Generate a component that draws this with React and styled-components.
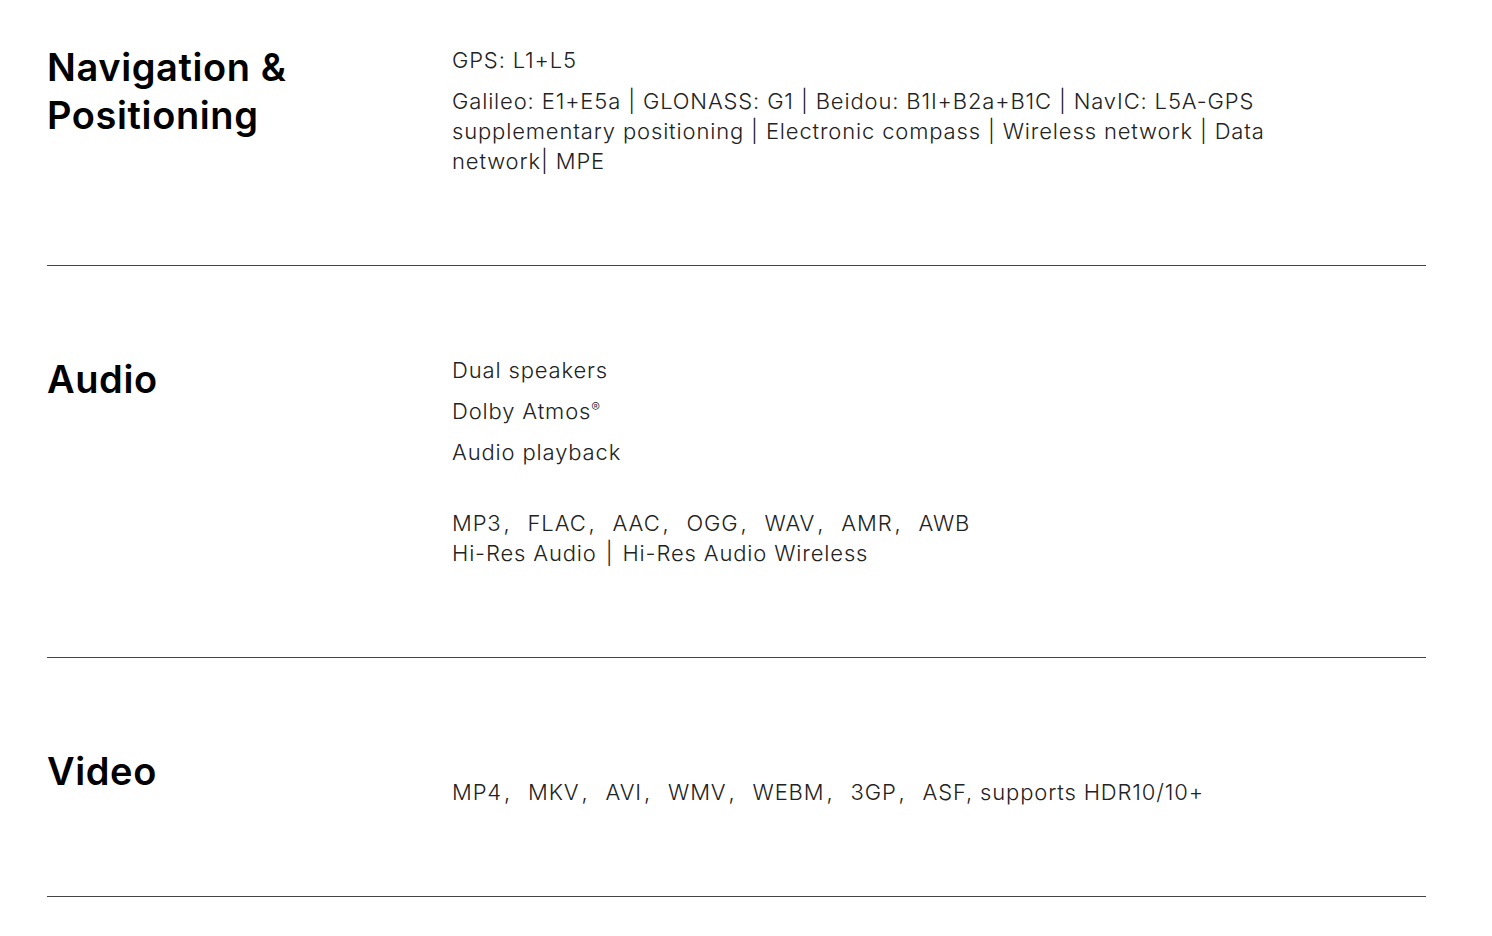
import React from "react";
import styled, { createGlobalStyle } from "styled-components";

const Global = createGlobalStyle`
  html, body { margin: 0; padding: 0; background: #fff; }
  body { font-family: Inter, "Noto Sans", "Noto Sans CJK SC", sans-serif; color: #000; }
`;

const Page = styled.div`
  width: 1379px;
  margin-left: 47px;
`;

const Section = styled.section`
  display: grid;
  grid-template-columns: 405px 860px;
  padding: ${(p) => (p.$first ? "43px" : "89px")} 0 89px;
  border-bottom: 1px solid #444;
`;

const Title = styled.h2`
  margin: 0;
  font-family: Inter, "Noto Sans", sans-serif;
  font-weight: 600;
  font-size: 38px;
  line-height: 48px;
  letter-spacing: 0.6px;
  color: #000;
`;

const Body = styled.div`
  padding-top: ${(p) => p.$offset || 0}px;
`;

const Para = styled.p`
  margin: ${(p) => p.$gap ?? 11}px 0 0;
  font-family: Inter, "Noto Sans", "Noto Sans CJK SC", sans-serif;
  font-weight: 300;
  font-size: 22px;
  line-height: 30px;
  letter-spacing: 0.85px;
  color: #222;
  &:first-child { margin-top: 0; }
`;

const Sep = styled.span`
  margin: 0 9px;
`;

const Comma = styled.span`
  padding-left: 2px;
  margin-right: 17px;
`;

const Sup = styled.sup`
  font-size: 13px;
  vertical-align: 7px;
  line-height: 0;
`;

const List = ({ items }) =>
  items.map((it, i) => (
    <React.Fragment key={i}>
      {it}
      {i < items.length - 1 && <Comma>,</Comma>}
    </React.Fragment>
  ));

export default function App() {
  return (
    <>
      <Global />
      <Page>
        <Section $first>
          <Title>Navigation &amp;<br />Positioning</Title>
          <Body $offset={2}>
            <Para>GPS: L1+L5</Para>
            <Para>
              Galileo: E1+E5a | GLONASS: G1 | Beidou: B1I+B2a+B1C | NavIC: L5A-GPS supplementary positioning | Electronic compass | Wireless network | Data network| MPE
            </Para>
          </Body>
        </Section>
        <Section>
          <Title>Audio</Title>
          <Body $offset={0}>
            <Para>Dual speakers</Para>
            <Para>Dolby Atmos<Sup>®</Sup></Para>
            <Para>Audio playback</Para>
            <Para $gap={41}>
              <List items={["MP3", "FLAC", "AAC", "OGG", "WAV", "AMR", "AWB"]} />
              <br />
              Hi-Res Audio<Sep>|</Sep>Hi-Res Audio Wireless
            </Para>
          </Body>
        </Section>
        <Section>
          <Title>Video</Title>
          <Body $offset={30}>
            <Para>
              <List items={["MP4", "MKV", "AVI", "WMV", "WEBM", "3GP", "ASF, supports HDR10/10+"]} />
            </Para>
          </Body>
        </Section>
      </Page>
    </>
  );
}
